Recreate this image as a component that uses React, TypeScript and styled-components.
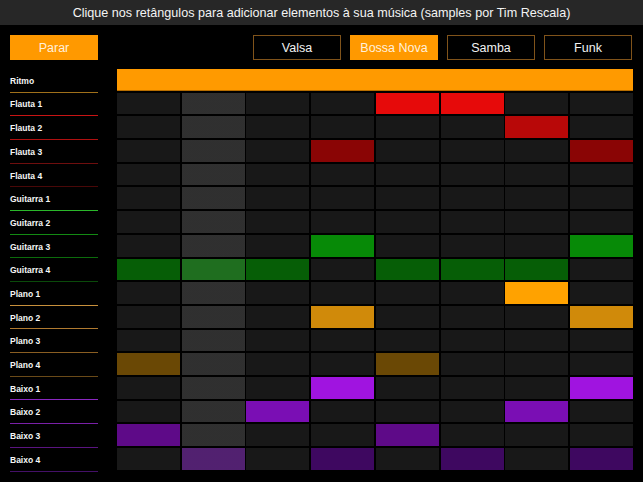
import styled, { createGlobalStyle } from "styled-components";

const GlobalStyle = createGlobalStyle`
	html, body {
		margin: 0;
		padding: 0;
		background: #000;
	}
	body {
		font-family: "Liberation Sans", Arial, sans-serif;
		color: #fff;
	}
`;

const Page = styled.div`
	width: 643px;
	height: 482px;
	background: #000;
	overflow: hidden;
`;

const Header = styled.div`
	height: 25px;
	background: #272727;
	display: flex;
	align-items: center;
	justify-content: center;
	font-size: 12.6px;
	color: #f4f4f4;
`;

const Toolbar = styled.div`
	display: flex;
	align-items: center;
	padding: 10px 11px 0 10px;
	height: 25px;
`;

const Spacer = styled.div`
	flex: 1;
`;

const Button = styled.div<{ $active?: boolean; $gap?: number }>`
	width: ${(p) => (p.$active ? 88 : 86)}px;
	height: ${(p) => (p.$active ? 25 : 23)}px;
	margin-left: ${(p) => p.$gap ?? 0}px;
	display: flex;
	align-items: center;
	justify-content: center;
	font-size: 12.5px;
	color: ${(p) => (p.$active ? "#fff0dc" : "#f2f2f2")};
	background: ${(p) => (p.$active ? "#ff9900" : "#000")};
	border: ${(p) => (p.$active ? "none" : "1px solid #80531a")};
`;

const Board = styled.div`
	display: flex;
	padding: 9px 10px 0 10px;
`;

const Labels = styled.div`
	width: 88px;
	margin-right: 19px;
	display: grid;
	grid-template-rows: repeat(17, 21.7px);
	row-gap: 2px;
`;

const Label = styled.div<{ $line: string }>`
	font-size: 8.5px;
	font-weight: bold;
	color: #f6f6f6;
	display: flex;
	align-items: center;
	padding-top: 1px;
	box-sizing: border-box;
	height: 23.5px;
	border-bottom: 1.5px solid ${(p) => p.$line};
`;

const Grid = styled.div`
	flex: 1;
	display: grid;
	grid-template-columns: repeat(8, 1fr);
	grid-template-rows: repeat(17, 21.7px);
	gap: 2px 1.7px;
`;

const RhythmBar = styled.div`
	grid-column: 1 / span 8;
	background: #ff9a00;
	box-shadow: inset 0 -1px 0 #b86e00;
`;

const Cell = styled.div<{ $fill?: string; $playhead?: boolean }>`
	background-color: ${(p) => p.$fill ?? "#181818"};
	background-image: ${(p) =>
		p.$playhead ? "linear-gradient(rgba(255,255,255,0.1), rgba(255,255,255,0.1))" : "none"};
`;

type Track = { name: string; line: string; fill: string; on: number[] };

const tracks: Track[] = [
	{ name: "Flauta 1", line: "#c81414", fill: "#e60a0a", on: [4, 5] },
	{ name: "Flauta 2", line: "#b01010", fill: "#b80808", on: [6] },
	{ name: "Flauta 3", line: "#6e0e0e", fill: "#8a0505", on: [3, 7] },
	{ name: "Flauta 4", line: "#4a0808", fill: "#6a0505", on: [] },
	{ name: "Guitarra 1", line: "#2ab82a", fill: "#10b010", on: [] },
	{ name: "Guitarra 2", line: "#138a13", fill: "#0a9a0a", on: [] },
	{ name: "Guitarra 3", line: "#0c6c0c", fill: "#078a07", on: [3, 7] },
	{ name: "Guitarra 4", line: "#0a4a0a", fill: "#065e06", on: [0, 1, 2, 4, 5, 6] },
	{ name: "Plano 1", line: "#c8903c", fill: "#ffa200", on: [6] },
	{ name: "Plano 2", line: "#b07a30", fill: "#d08a0a", on: [3, 7] },
	{ name: "Plano 3", line: "#8a5e22", fill: "#9a6a08", on: [] },
	{ name: "Plano 4", line: "#6a4a18", fill: "#6a4805", on: [0, 4] },
	{ name: "Baixo 1", line: "#8a28c0", fill: "#a014e0", on: [3, 7] },
	{ name: "Baixo 2", line: "#7a20a8", fill: "#7a0eb4", on: [2, 6] },
	{ name: "Baixo 3", line: "#5a1480", fill: "#5e0a88", on: [0, 4] },
	{ name: "Baixo 4", line: "#441068", fill: "#3e0860", on: [1, 3, 5, 7] },
];

const styles = ["Valsa", "Bossa Nova", "Samba", "Funk"];
const playhead = 1;

export default function App() {
	return (
		<Page>
			<GlobalStyle />
			<Header>Clique nos retângulos para adicionar elementos à sua música (samples por Tim Rescala)</Header>
			<Toolbar>
				<Button $active>Parar</Button>
				<Spacer />
				{styles.map((s, i) => (
					<Button key={s} $active={s === "Bossa Nova"} $gap={i === 0 ? 0 : 9}>
						{s}
					</Button>
				))}
			</Toolbar>
			<Board>
				<Labels>
					<Label $line="#a0701a">Ritmo</Label>
					{tracks.map((t) => (
						<Label key={t.name} $line={t.line}>{t.name}</Label>
					))}
				</Labels>
				<Grid>
					<RhythmBar />
					{tracks.map((t) =>
						Array.from({ length: 8 }, (_, c) => (
							<Cell
								key={t.name + c}
								$fill={t.on.includes(c) ? t.fill : undefined}
								$playhead={c === playhead}
							/>
						))
					)}
				</Grid>
			</Board>
		</Page>
	);
}
